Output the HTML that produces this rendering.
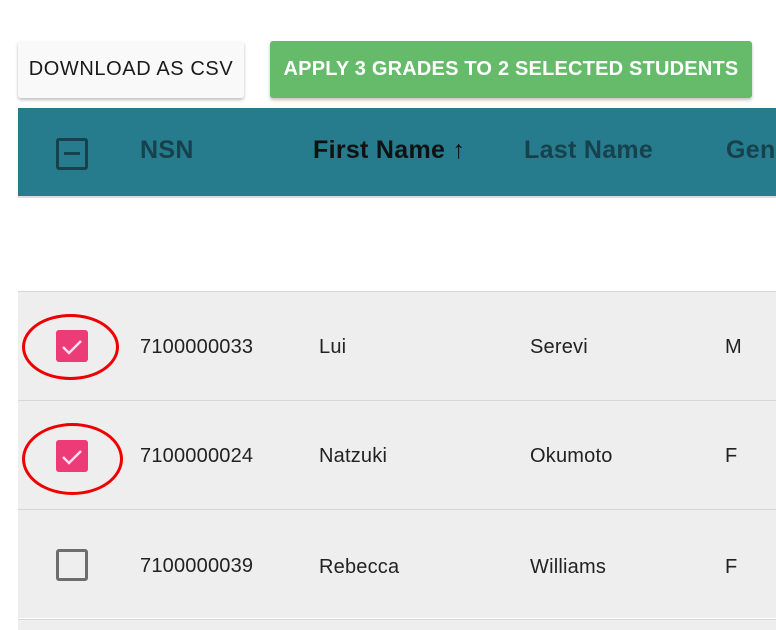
<!DOCTYPE html><html><head><style>
html,body{margin:0;width:776px;height:630px;overflow:hidden}
body{background:#fff;font-family:"Liberation Sans",Roboto,sans-serif}
#w{position:relative;width:776px;height:630px;overflow:hidden}
.a{position:absolute}
.btn{top:41px;height:57px;border-radius:3px;box-shadow:0 2px 3px rgba(0,0,0,.25);font-size:20px;line-height:57px;text-align:center;letter-spacing:.6px}
.hd{top:108px;left:18px;width:758px;height:88px;background:#267b8d;border-bottom:2px solid #ddd}
.ht{top:136px;font-size:25px;font-weight:bold;color:#17414d;letter-spacing:.3px;white-space:nowrap}
.row{left:18px;width:758px;height:108px;background:#eee;border-top:1px solid #d6d6d6}
.t{font-size:20px;color:#222;letter-spacing:.2px}
.cb{left:56px;width:32px;height:32px;border-radius:3px;background:#ec3b77}
.el{border:3px solid #e00;border-radius:50%}
</style></head><body><div id="w">
<div class="a btn" style="left:18px;width:226px;background:#f9f9f9;color:#1a1a1a">DOWNLOAD AS CSV</div>
<div class="a btn" style="left:270px;width:482px;background:#66bb6a;color:#fff;font-weight:bold;letter-spacing:.2px">APPLY 3 GRADES TO 2 SELECTED STUDENTS</div>
<div class="a hd"></div>
<div class="a" style="left:56px;top:138px;width:26px;height:26px;border:3px solid #17414d;border-radius:3px"><div class="a" style="left:5px;top:11px;width:16px;height:3px;background:#17414d"></div></div>
<div class="a ht" style="left:140px">NSN</div>
<div class="a ht" style="left:313px;color:#111">First Name <span style="font-weight:normal">↑</span></div>
<div class="a ht" style="left:524px">Last Name</div>
<div class="a" style="left:726px;top:130px;width:50px;height:40px;overflow:hidden"><div class="a ht" style="left:0;top:6px">Gender</div></div>
<div class="a row" style="top:291px"></div>
<div class="a row" style="top:400px"></div>
<div class="a row" style="top:509px"></div>
<div class="a row" style="top:619px;height:11px"></div>
<div class="a cb" style="top:330px"><svg width="32" height="32"><path d="M7 17l6 6 12-12" stroke="#fde" stroke-width="2.5" fill="none"/></svg></div>
<div class="a cb" style="top:440px"><svg width="32" height="32"><path d="M7 17l6 6 12-12" stroke="#fde" stroke-width="2.5" fill="none"/></svg></div>
<div class="a" style="left:56px;top:549px;width:26px;height:26px;border:3px solid #6d6d6d;border-radius:3px"></div>
<div class="a el" style="left:22px;top:314px;width:91px;height:60px"></div>
<div class="a el" style="left:22px;top:423px;width:95px;height:66px"></div>
<div class="a t" style="left:140px;top:336px">7100000033</div>
<div class="a t" style="left:319px;top:336px">Lui</div>
<div class="a t" style="left:530px;top:336px">Serevi</div>
<div class="a t" style="left:725px;top:336px">M</div>
<div class="a t" style="left:140px;top:445px">7100000024</div>
<div class="a t" style="left:319px;top:445px">Natzuki</div>
<div class="a t" style="left:530px;top:445px">Okumoto</div>
<div class="a t" style="left:725px;top:445px">F</div>
<div class="a t" style="left:140px;top:555px">7100000039</div>
<div class="a t" style="left:319px;top:556px">Rebecca</div>
<div class="a t" style="left:530px;top:556px">Williams</div>
<div class="a t" style="left:725px;top:556px">F</div>
</div></body></html>
